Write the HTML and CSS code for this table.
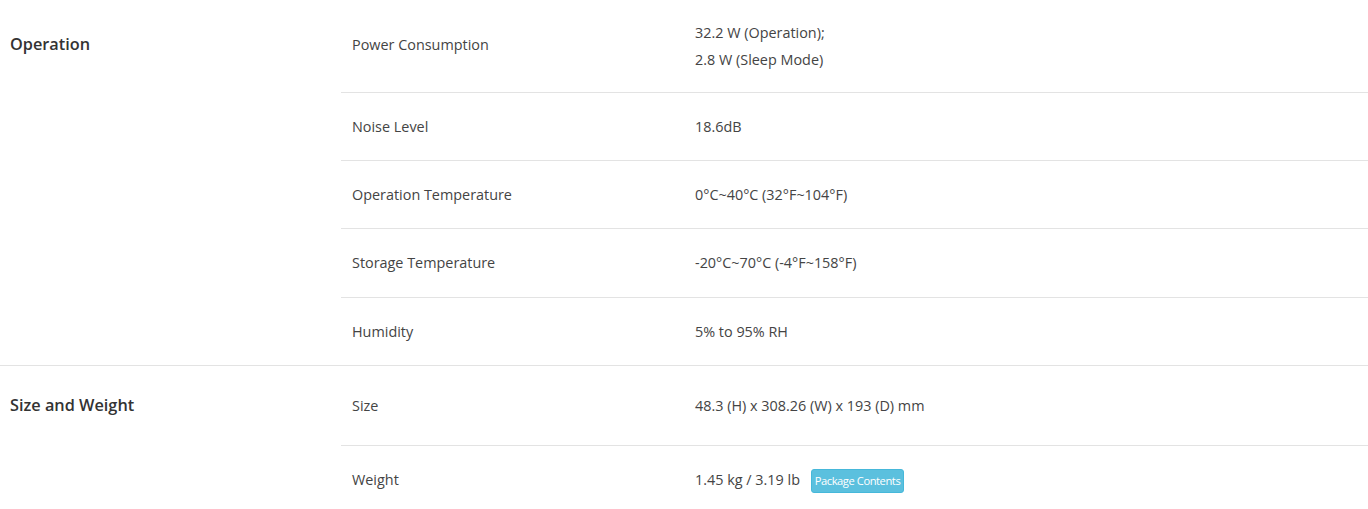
FILE: index.html
```html
<!DOCTYPE html>
<html lang="en">
<head>
<meta charset="utf-8">
<title>Specifications</title>
<link rel="stylesheet" href="styles.css">
</head>
<body>
<div class="specs">
  <section class="group">
    <h3 class="group-title lift">Operation</h3>
    <div class="label first lift">Power Consumption</div>
    <div class="value first">32.2 W (Operation);<br>2.8 W (Sleep Mode)</div>
    <div class="label">Noise Level</div>
    <div class="value">18.6dB</div>
    <div class="label">Operation Temperature</div>
    <div class="value">0°C~40°C (32°F~104°F)</div>
    <div class="label">Storage Temperature</div>
    <div class="value">-20°C~70°C (-4°F~158°F)</div>
    <div class="label">Humidity</div>
    <div class="value">5% to 95% RH</div>
  </section>
  <section class="group">
    <h3 class="group-title">Size and Weight</h3>
    <div class="label first tall">Size</div>
    <div class="value first tall">48.3 (H) x 308.26 (W) x 193 (D) mm</div>
    <div class="label">Weight</div>
    <div class="value">1.45 kg / 3.19 lb <span class="btn-info">Package Contents</span></div>
  </section>
</div>
</body>
</html>
```

FILE: styles.css
```css
html, body {
  margin: 0;
  padding: 0;
  background: #fff;
}
body {
  font-family: "Open Sans", "Noto Sans", sans-serif;
  color: #444;
  font-size: 14.4px;
  line-height: 27px;
}
.group {
  display: grid;
  grid-template-columns: 341px 343px 1fr;
  border-bottom: 1px solid #e3e3e3;
}
.group-title {
  grid-column: 1;
  grid-row: 1;
  align-self: center;
  margin: 0;
  padding-left: 10px;
  font-size: 16.3px;
  font-weight: 600;
  color: #333;
}
.group-title.lift {
  padding-bottom: 4px;
}
.label, .value {
  display: flex;
  align-items: center;
  padding: 20.1px 11px;
  border-top: 1px solid #e3e3e3;
}
.label { grid-column: 2; }
.value { grid-column: 3; display: block; }
.label.first, .value.first {
  border-top: none;
  padding-top: 19px;
  padding-bottom: 19px;
}
.label.first.lift {
  padding-top: 17px;
  padding-bottom: 21px;
}
.label.tall, .value.tall {
  padding-top: 26px;
  padding-bottom: 26px;
}
.btn-info {
  display: inline-block;
  margin-left: 7px;
  padding: 0 3px;
  line-height: 22px;
  font-size: 11.2px;
  letter-spacing: -0.45px;
  color: #fff;
  background: #5bc0de;
  border: 1px solid #46b8da;
  border-radius: 3px;
  vertical-align: middle;
}
```
